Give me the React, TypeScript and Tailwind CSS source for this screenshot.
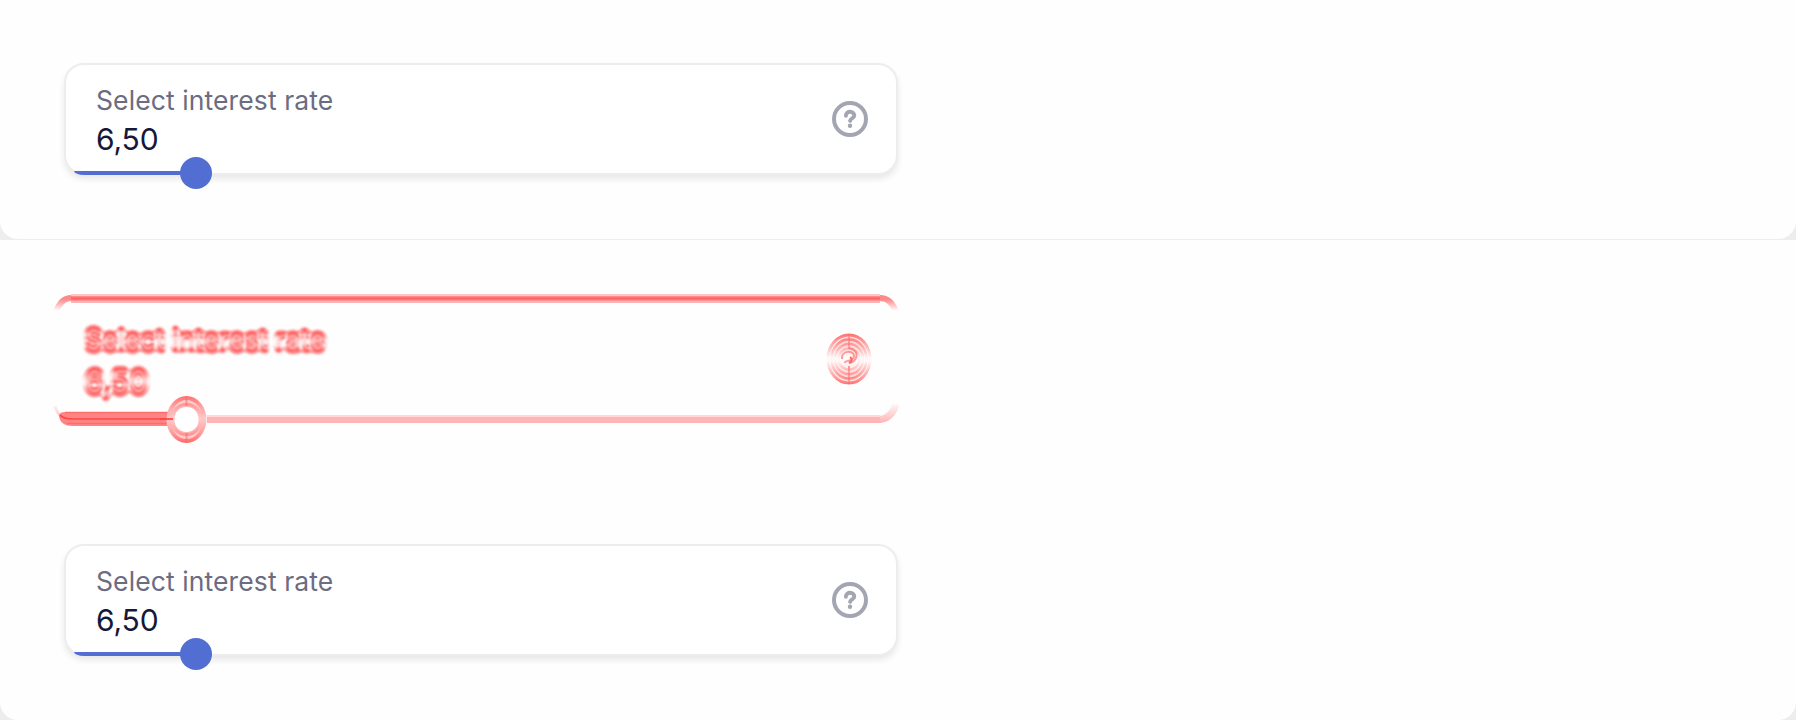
function HelpIcon() {
  return (
    <svg className="block h-9 w-9 shrink-0" viewBox="0 0 36 36" fill="none" stroke="#a3a5b3" strokeWidth="4">
      <circle cx="18" cy="18" r="16" />
      <path d="M13.9 14.7c0-5.6 8.4-5 8.4-.3 0 3-4.1 2.9-4.2 5.5" strokeWidth="3.9" strokeLinecap="round" strokeLinejoin="round" />
      <circle cx="18" cy="24.8" r="2.2" fill="#a3a5b3" stroke="none" />
    </svg>
  );
}

function RateCard() {
  return (
    <div className="relative h-28 w-[834px] rounded-[20px] border-2 border-[#ededed] bg-white shadow-[0_4px_6px_rgba(0,0,0,0.09)]">
      <div className="flex h-full items-center justify-between pr-7 pl-[30px]">
        <div className="flex flex-col pt-1">
          <span className="h-[34px] text-[26.5px] leading-[34px] tracking-[0.1px] whitespace-nowrap text-[#6b6c80]">Select interest rate</span>
          <span className="mt-0.5 h-10 text-[30px] leading-10 tracking-[-0.1px] text-[#15183a]">6,50</span>
        </div>
        <HelpIcon />
      </div>
      <div className="absolute top-[106px] left-2 h-1 w-[112px] rounded-bl-[10px_4px] bg-[#526ed3]" />
      <div className="absolute top-[92px] left-[114px] h-8 w-8 rounded-full bg-[#526ed3]" />
    </div>
  );
}

function DiffCard() {
  return (
    <div className="relative h-40 w-[860px]">
      <svg className="absolute inset-0 h-40 w-[860px]" viewBox="50 290 860 160" fill="none">
        <defs>
          <filter id="echo" x="-10%" y="-40%" width="120%" height="180%" colorInterpolationFilters="sRGB">
            <feGaussianBlur in="SourceGraphic" stdDeviation="1.8" result="b2" />
            <feComponentTransfer in="b2" result="d2">
              <feFuncA type="linear" slope="6" intercept="-0.8" />
            </feComponentTransfer>
            <feGaussianBlur in="SourceGraphic" stdDeviation="2.8" />
            <feComponentTransfer result="d4">
              <feFuncA type="linear" slope="14" intercept="-0.55" />
            </feComponentTransfer>
            <feOffset in="SourceGraphic" dy="-2" result="a1" />
            <feOffset in="SourceGraphic" dy="2" result="a2" />
            <feComposite in="a1" in2="a2" operator="arithmetic" k2="0.5" k3="-0.5" result="e1" />
            <feComposite in="a2" in2="a1" operator="arithmetic" k2="0.5" k3="-0.5" result="e2" />
            <feOffset in="d2" dy="-1.5" result="f1" />
            <feOffset in="d2" dy="1.5" result="f2" />
            <feComposite in="f1" in2="f2" operator="arithmetic" k2="0.55" k3="-0.55" result="e3" />
            <feComposite in="f2" in2="f1" operator="arithmetic" k2="0.55" k3="-0.55" result="e4" />
            <feOffset in="d4" dy="-1.5" result="g1" />
            <feOffset in="d4" dy="1.5" result="g2" />
            <feComposite in="g1" in2="g2" operator="arithmetic" k2="0.6" k3="-0.6" result="e5" />
            <feComposite in="g2" in2="g1" operator="arithmetic" k2="0.6" k3="-0.6" result="e6" />
            <feComponentTransfer in="b2" result="haze">
              <feFuncA type="linear" slope="0.4" />
            </feComponentTransfer>
            <feMerge>
              <feMergeNode in="haze" />
              <feMergeNode in="e1" />
              <feMergeNode in="e2" />
              <feMergeNode in="e3" />
              <feMergeNode in="e4" />
              <feMergeNode in="e5" />
              <feMergeNode in="e6" />
            </feMerge>
            <feGaussianBlur stdDeviation="0.9" />
          </filter>
          <filter id="soft" x="-20%" y="-20%" width="140%" height="140%">
            <feGaussianBlur stdDeviation="0.75" />
          </filter>
          <linearGradient id="top" x1="0" y1="294" x2="0" y2="315" gradientUnits="userSpaceOnUse">
            <stop stopColor="#ff8989" />
            <stop offset="0.25" stopColor="#ff8989" />
            <stop offset="0.8" stopColor="#ff8989" stopOpacity="0" />
          </linearGradient>
          <linearGradient id="bottom" x1="0" y1="402" x2="0" y2="423" gradientUnits="userSpaceOnUse">
            <stop stopColor="#ffb3b3" stopOpacity="0" />
            <stop offset="1" stopColor="#ffb3b3" />
          </linearGradient>
          <linearGradient id="rings" x1="0" y1="334" x2="0" y2="385" gradientUnits="userSpaceOnUse">
            <stop stopColor="#ff7070" />
            <stop offset="0.46" stopColor="#ff7070" stopOpacity="0.05" />
            <stop offset="0.54" stopColor="#ff7070" stopOpacity="0.05" />
            <stop offset="1" stopColor="#ff7070" />
          </linearGradient>
          <linearGradient id="thumb" x1="0" y1="395" x2="0" y2="443" gradientUnits="userSpaceOnUse">
            <stop stopColor="#ff6868" />
            <stop offset="0.5" stopColor="#ff9494" stopOpacity="0.05" />
            <stop offset="1" stopColor="#ff6868" />
          </linearGradient>
        </defs>
        <g filter="url(#soft)">
          <path d="M56 312Q61 298 71 298H880Q891 298 896 312" stroke="url(#top)" strokeWidth="6" />
          <path d="M71 295H880" stroke="#ffc8c8" strokeWidth="2" />
          <path d="M71 302H880" stroke="#ffb5b5" strokeWidth="2" />
          <path d="M71 298.5H880" stroke="#ff6060" strokeWidth="2" />
          <path d="M55 406Q57 414 64 419" stroke="url(#bottom)" strokeWidth="3" />
          <path d="M207 419.5H880Q892 418 896 404" stroke="url(#bottom)" strokeWidth="7" />
          <path d="M207 419.5H880" stroke="#ffb5b5" strokeWidth="7" />
          <path d="M207 416H880" stroke="#ffd7d7" strokeWidth="2" />
          <path d="M168 412H65Q59 412 59 416Q60 426 73 426H168Q173 423 173 419Q173 415 168 412Z" fill="#ff8585" />
          <path d="M60 415Q63 419 73 419H171" stroke="#ff4444" strokeWidth="1.7" />
          <path d="M65 412.5H168M67 423.5H169" stroke="#ff6c6c" strokeWidth="1.4" />
          <ellipse cx="186.5" cy="419.5" rx="16" ry="18" fill="white" stroke="#ffcaca" strokeWidth="8" />
          <ellipse cx="186.5" cy="419.5" rx="18" ry="21.5" stroke="url(#thumb)" strokeWidth="4" />
          <ellipse cx="186.5" cy="419.5" rx="14.5" ry="14.5" stroke="url(#thumb)" strokeWidth="4" />
          <path d="M186.5 396V406M186.5 433V443" stroke="#ff6b6b" strokeWidth="2" opacity=".6" />
          <path d="M160 419H173" stroke="#ff4444" strokeWidth="1.7" />
          <ellipse cx="849" cy="359" rx="19" ry="22" fill="url(#rings)" opacity=".45" />
          <g stroke="url(#rings)">
            <ellipse cx="849" cy="359" rx="21" ry="24" strokeWidth="3" />
            <ellipse cx="849" cy="359" rx="17.5" ry="19.5" strokeWidth="2.5" />
            <ellipse cx="849" cy="359" rx="14" ry="15" strokeWidth="2.5" />
            <ellipse cx="849" cy="359" rx="10.5" ry="10.5" strokeWidth="2.5" />
          </g>
          <path d="M849 335V349M849 370V384" stroke="#ff6b6b" strokeWidth="2" opacity=".5" />
          <path d="M842 359C841 350 854 350 854 356S844 360 845 363M849 348C861 351 857 362 849 363M849 366V370" stroke="#ff7777" strokeWidth="2" opacity=".75" />
          <path d="M850 357Q854 360 849 363" stroke="#ff6666" strokeWidth="2" />
        </g>
      </svg>
      <div className="relative flex w-[290px] flex-col pt-8 pl-[35px] text-[#ff3838]">
        <span className="h-[34px] [filter:url(#echo)] text-[26.5px] leading-[34px] tracking-[0.25px] whitespace-nowrap">Select interest rate</span>
        <span className="mt-[5px] h-10 w-[90px] [filter:url(#echo)] text-[30px] leading-10">6,50</span>
      </div>
    </div>
  );
}

export default function App() {
  return (
    <main className="flex h-[720px] w-[1796px] flex-col overflow-hidden bg-[#fefefe] font-[Inter,sans-serif]">
      <div className="h-60 shrink-0 bg-[#ededed]">
        <section className="h-[239px] rounded-b-[18px] bg-[#fefefe] pt-[63px] pl-16">
          <RateCard />
        </section>
      </div>
      <section className="h-60 shrink-0 bg-[#fefefe] pt-[50px] pl-[50px]">
        <DiffCard />
      </section>
      <div className="h-60 shrink-0 bg-[#ededed]">
        <section className="h-60 rounded-b-[18px] bg-[#fefefe] pt-16 pl-16">
          <RateCard />
        </section>
      </div>
    </main>
  );
}
